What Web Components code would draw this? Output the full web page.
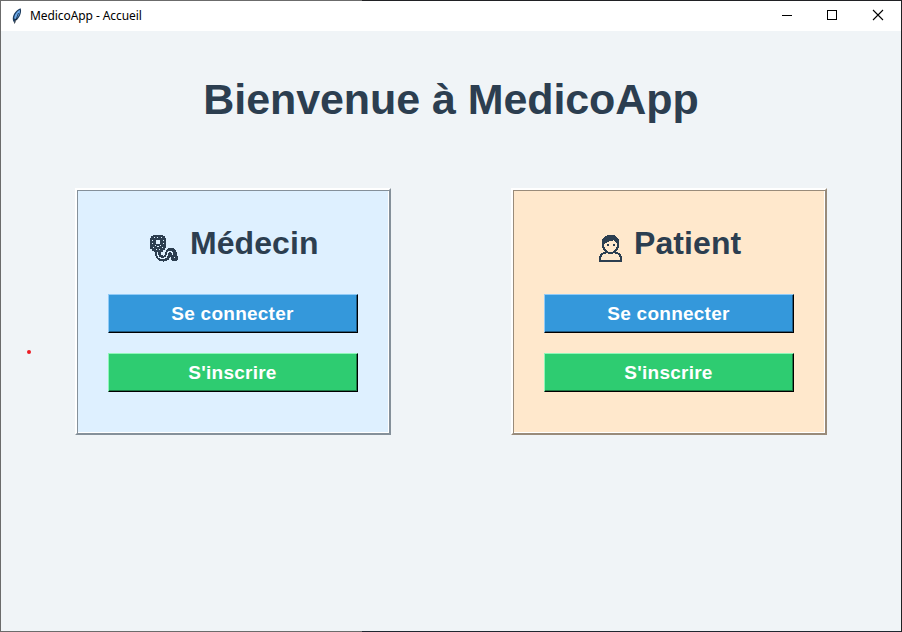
<!DOCTYPE html>
<html lang="fr">
<head>
<meta charset="utf-8">
<title>MedicoApp - Accueil</title>
<style>
html,body{margin:0;height:100%;overflow:hidden;background:#f0f4f7}
</style>
</head>
<body>
<medico-window></medico-window>
<script>
const define = (name, html) => customElements.define(name, class extends HTMLElement {
  constructor() {
    super();
    const t = document.createElement('template');
    t.innerHTML = html;
    this.attachShadow({mode: 'open'}).appendChild(t.content.cloneNode(true));
  }
});

define('title-bar', `
<style>
:host{display:flex;align-items:center;height:30px;background:#fff;color:#000;font:12px "Noto Sans","Open Sans",sans-serif;padding-left:8px;box-sizing:border-box}
svg{display:block;flex:none}
.name{margin-left:5px;flex:1;white-space:nowrap;line-height:30px}
.name span{letter-spacing:-.08px}
</style>
<svg width="16" height="16" viewBox="0 0 16 16"><path d="M4 12.500C3 8 6 2.500 11.500.300 13 3 11.500 8.500 8 12L6 12.500 5.500 15.500Z" fill="#1b3a5c"/><path d="M5.200 10.500C5.200 7 8 3.500 10.800 1.800 11.500 5 9.500 8.800 7 11Z" fill="#6aa8ea"/><path d="M9.500 5L5.500 15.500" stroke="#10151d" fill="none" stroke-width=".7"/></svg>
<div class="name"><span><slot></slot></span></div>
<svg width="46" height="30" viewBox="0 0 46 30" shape-rendering="crispEdges"><path d="M18 14.500h10" stroke="#000"/></svg>
<svg width="46" height="30" viewBox="0 0 46 30" shape-rendering="crispEdges"><path d="M17.500 9.500h9v9h-9z" stroke="#000" fill="none"/></svg>
<svg width="45" height="30" viewBox="0 0 45 30"><path d="M17 9l10 10M27 9l-10 10" stroke="#000" stroke-width="1.100" fill="none"/></svg>
`);

define('action-button', `
<style>
:host{display:block;width:250px;height:39px}
button{all:unset;box-sizing:border-box;display:block;width:100%;height:100%;background:var(--face);border:1px solid;border-color:var(--light) #000 #000 var(--light);box-shadow:inset -1px -1px var(--dark);color:#fff;font:bold 19px/36px "Liberation Sans",Arial,sans-serif;text-align:center}
:host([kind=login]){--face:#3498db;--light:#91cbf7;--dark:#1f5b83}
:host([kind=signup]){--face:#2ecc71;--light:#8ff7b9;--dark:#1c7a44}
span{letter-spacing:.25px;margin-right:1px}
</style>
<button><span><slot></slot></span></button>
`);

define('doctor-icon', `
<style>:host{display:block}svg{display:block}</style>
<svg width="30" height="30" viewBox="0 0 30 30" fill="none" shape-rendering="crispEdges">
<path d="M8.500 17C8.500 23 12 25 15 24.500C19 24 19 21 19.500 18.500C21 15.500 25 16 25 22" stroke="currentColor" stroke-width="6"/>
<path d="M8.500 18v3h1v2h2v1h4v-1h2v-2h1v-3h1v-1h3v1h1v3" stroke="#def0ff"/>
<path d="M13 18v2h2v-2" stroke="#def0ff"/>
<path d="M4 1h10v1h2v2h1v10h-1v2h-2v2H5v-1H3v-2H1V4h1V2h2z" fill="currentColor"/>
<path d="M5 3h1v1H5zM8 3h1v1H8zM12 3h1v1h-1zM3 6h1v1H3zM14 6h1v1h-1zM3 9h1v1H3zM14 9h1v1h-1zM4 13h1v1H4zM13 13h1v1h-1zM7 15h1v1H7zM10 15h1v1h-1zM7 6h4v4H7zM6 11h1v1H6zM11 11h1v1h-1zM8 12h2v1H8z" fill="#def0ff"/>
<circle cx="25.500" cy="24" r="3.500" fill="currentColor"/>
<path d="M25 23.500h1" stroke="#def0ff"/>
</svg>`);

define('patient-icon', `
<style>:host{display:block}svg{display:block}</style>
<svg width="26" height="30" viewBox="0 0 26 30" fill="none" stroke="currentColor" stroke-width="2" shape-rendering="crispEdges">
<path d="M5 9V13L7 16L10 18.500H15L18 16L20 13V9"/>
<path d="M4 10V6L6 3L10 1H16L19 3L21 6V10H19L16 6.500C13 6 9 9 6 10Z" fill="currentColor" stroke="none"/>
<path d="M9 10.500h2M15 10.500h2"/>
<path d="M8 18.500L4 20L2 23V27H23V23L21 20L17 18.500"/>
</svg>`);

define('role-card', `
<style>
:host{display:flex;flex-direction:column;align-items:center;box-sizing:border-box;width:316px;height:247px;background:var(--card);border:2px solid;border-color:#fff var(--edge) var(--edge) #fff;box-shadow:inset 1px 1px var(--edge),inset -1px -1px #fff;padding-top:32px}
header{display:flex;width:100%;height:44px;margin-bottom:28px;box-sizing:border-box;padding-left:var(--start)}
.icon{margin-top:12px;flex:none;width:var(--icon)}
h2{margin:0;font:bold 32px/42px "Liberation Sans",Arial,sans-serif;letter-spacing:.08px;white-space:nowrap}
.actions{display:grid;gap:20px}
</style>
<header><div class="icon"><slot name="icon"></slot></div><h2><slot></slot></h2></header>
<div class="actions">
<action-button kind="login">Se connecter</action-button>
<action-button kind="signup">S'inscrire</action-button>
</div>`);

define('medico-window', `
<style>
:host{display:grid;grid-template-rows:30px 1fr;position:relative;box-sizing:border-box;width:902px;height:632px;padding:1px;background:#f0f4f7;color:#2c3e50}
.edge{position:absolute}
.t{left:0;top:0;width:902px;height:1px;background:linear-gradient(90deg,#6b6b6b 362px,#202124 362px)}
.b{left:0;bottom:0;width:902px;height:1px;background:linear-gradient(90deg,#6b6b6b 362px,#202630 362px)}
.l{left:0;top:0;width:1px;height:632px;background:#6b6b6b}
.r{right:0;top:0;width:1px;height:632px;background:#202124}
main{display:flex;flex-direction:column;align-items:center}
h1{margin:38px 0 0;height:60px;font:bold 43px/60px "Liberation Sans",Arial,sans-serif;white-space:nowrap;letter-spacing:-.08px}
.cards{display:flex;gap:120px;margin-top:59px}
.doctor{--card:#def0ff;--edge:#85909a;--start:72px;--icon:41px}
.patient{--card:#ffe8cc;--edge:#998b7a;--start:85px;--icon:36px}
.dot{position:absolute;left:26.600px;top:350px;width:4px;height:4px;border-radius:50%;background:#ed1c24}
</style>
<title-bar>MedicoApp - Accueil</title-bar>
<main>
<h1>Bienvenue à MedicoApp</h1>
<div class="cards">
<role-card class="doctor"><doctor-icon slot="icon"></doctor-icon>Médecin</role-card>
<role-card class="patient"><patient-icon slot="icon"></patient-icon>Patient</role-card>
</div>
</main>
<i class="dot"></i>
<i class="edge t"></i><i class="edge b"></i><i class="edge l"></i><i class="edge r"></i>
`);
</script>
</body>
</html>
